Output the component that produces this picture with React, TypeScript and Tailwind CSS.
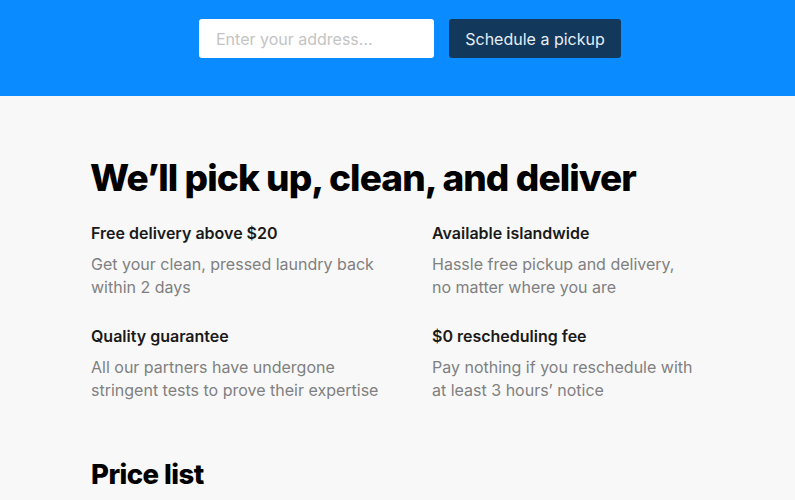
export default function App() {
  const features = [
    { t: "Free delivery above $20", d: ["Get your clean, pressed laundry back", "within 2 days"] },
    { t: "Available islandwide", d: ["Hassle free pickup and delivery,", "no matter where you are"] },
    { t: "Quality guarantee", d: ["All our partners have undergone", "stringent tests to prove their expertise"] },
    { t: "$0 rescheduling fee", d: ["Pay nothing if you reschedule with", "at least 3 hours\u2019 notice"] },
  ];
  return (
    <div className="min-h-[500px] bg-[#f8f8f8]" style={{ fontFamily: "Inter, 'Noto Sans', sans-serif" }}>
      <div className="h-[96px] bg-[#0a8bff] flex justify-center pt-[19px] gap-[15px] pl-[25px]">
        <div className="w-[235px] h-[39px] bg-white rounded-[3px] flex items-center px-[17px] text-[16px] text-[#c4c4c4]">
          Enter your address...
        </div>
        <div className="w-[172px] h-[39px] bg-[#12385c] rounded-[3px] flex items-center justify-center text-[16px] text-[#e6eef6]">
          Schedule a pickup
        </div>
      </div>
      <div className="pl-[90px] pt-[58px]">
        <h1 className="text-[37px] leading-[48px] font-extrabold tracking-[-0.025em] text-black">
          We{"\u2019"}ll pick up, clean, and deliver
        </h1>
        <div className="grid grid-cols-[341px_341px] mt-[19px] gap-y-[25px] pl-[1px]">
          {features.map((f) => (
            <div key={f.t}>
              <div className="text-[16px] leading-[24px] font-semibold text-[#1a1a1a]">{f.t}</div>
              <div className="mt-[8px] text-[16px] leading-[23px] text-[#808080]">
                {f.d.map((l) => (
                  <div key={l}>{l}</div>
                ))}
              </div>
            </div>
          ))}
        </div>
        <h2 className="mt-[54px] text-[27.5px] leading-[36px] font-extrabold tracking-[-0.02em] text-black pl-[1px]">Price list</h2>
      </div>
    </div>
  );
}
